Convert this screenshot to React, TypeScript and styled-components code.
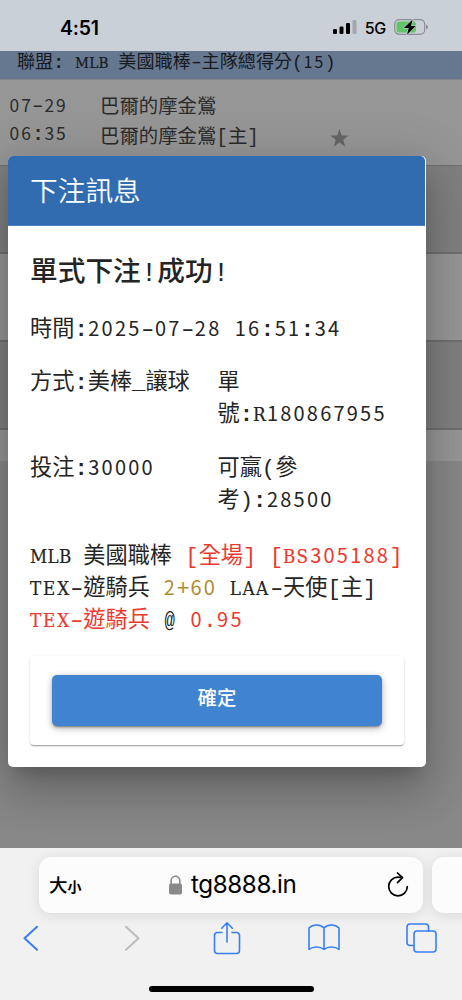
import React from "react";
import styled, { createGlobalStyle, css } from "styled-components";

const Global = createGlobalStyle`
  *, *::before, *::after { box-sizing: border-box; }
  html, body { margin: 0; padding: 0; }
  body { background: #888; -webkit-font-smoothing: antialiased; }
`;

const mono = `"Liberation Mono", "Noto Sans CJK TC", monospace`;
const ui = `Inter, "Noto Sans CJK TC", sans-serif`;

const Screen = styled.div`
  width: 462px;
  height: 1000px;
  display: flex;
  flex-direction: column;
  overflow: hidden;
  font-family: ${mono};
`;

const StatusBar = styled.header`
  flex: 0 0 51px;
  display: flex;
  align-items: center;
  justify-content: space-between;
  padding: 4px 34px 0 60px;
  background: #cad0d8;
  color: #000;
  font-family: ${ui};
`;

const Clock = styled.span`
  font-size: 19.4px;
  font-weight: 600;
  letter-spacing: -0.2px;
`;

const StatusIcons = styled.div`
  display: flex;
  align-items: center;
  svg { display: block; margin-bottom: 1px; }
`;

const Network = styled.span`
  margin: 1px 8px 0 8px;
  font-size: 16px;
  font-weight: 500;
  letter-spacing: -0.3px;
`;

const Page = styled.main`
  position: relative;
  flex: 1;
  min-height: 0;
  overflow: hidden;
  background: #888;
`;

const LeagueBar = styled.div`
  height: 28px;
  padding-left: 17px;
  background: #667890;
  color: #171a1e;
  font-size: 18.1px;
  line-height: 24px;
  white-space: nowrap;
`;

const Match = styled.div`
  display: grid;
  grid-template-columns: 91px 230px auto;
  height: 87px;
  padding: 13px 0 0 9px;
  background: #969696;
  border-top: 1px solid #828488;
  border-bottom: 1px solid #6e6e6e;
  color: #2b2b2b;
  font-size: 19.4px;
  line-height: 30px;
  white-space: nowrap;
`;

const MatchTime = styled.div`
  line-height: 28px;
`;

const StarCell = styled.div`
  align-self: end;
  height: 38px;
`;

const Stripe = styled.div<{ $tone: string; $h: number; $last?: boolean }>`
  height: ${(p) => p.$h}px;
  background: ${(p) => p.$tone};
  ${(p) => !p.$last && css`border-bottom: 2px solid #707070;`}
`;

const Dialog = styled.section`
  position: absolute;
  left: 8px;
  top: 105px;
  width: 418px;
  height: 611px;
  border-radius: 5px;
  overflow: hidden;
  background: #fff;
  color: #242424;
  display: flex;
  flex-direction: column;
  box-shadow: 0 12px 17px -8px rgba(0, 0, 0, 0.2), 0 27px 42px 3px rgba(0, 0, 0, 0.14),
    0 10px 51px 9px rgba(0, 0, 0, 0.12);
`;

const DialogHeader = styled.h2`
  flex: 0 0 70px;
  margin: 0 1px 0 0;
  padding: 7px 0 0 22px;
  border-bottom: 1px solid #4a83c4;
  border-top-right-radius: 5px;
  background: #316cb1;
  color: #fff;
  font-size: 27.7px;
  font-weight: 350;
  line-height: 62px;
`;

const DialogBody = styled.div`
  padding: 28px 22px 0;
  font-size: 22.2px;
  line-height: 32px;
  white-space: nowrap;
`;

const Headline = styled.h3`
  margin: 0 0 21px;
  font-size: 27.7px;
  font-weight: 500;
  line-height: 40px;
`;

const Details = styled.div`
  display: grid;
  grid-template-columns: 187.5px auto;
  row-gap: 22px;
  margin: 21px 0 24px;
`;

const Accent = styled.span<{ $c: string }>`
  color: ${(p) => p.$c};
`;

const ActionCard = styled.div`
  width: 374px;
  height: 89px;
  margin-top: 18px;
  padding: 19px 22px 0;
  border-radius: 4px;
  background: #fff;
  box-shadow: 0 2px 1px -1px rgba(0, 0, 0, 0.2), 0 1px 1px rgba(0, 0, 0, 0.14),
    0 1px 3px rgba(0, 0, 0, 0.14);
`;

const ConfirmButton = styled.button`
  display: block;
  width: 330px;
  height: 50.5px;
  padding: 0 0 7px;
  border: 0;
  border-radius: 5px;
  background: #4083d0;
  color: #fff;
  font-family: ${mono};
  font-size: 19.4px;
  font-weight: 500;
  box-shadow: 0 3px 1px -2px rgba(0, 0, 0, 0.2), 0 2px 2px rgba(0, 0, 0, 0.14),
    0 1px 6px rgba(0, 0, 0, 0.2), 0 4px 9px rgba(0, 0, 0, 0.12);
`;

const Digits = styled.span`
  margin: 0 -0.055em 0 0.03em;
  padding-right: 0.025em;
  font-family: "Noto Sans CJK TC", sans-serif;
  font-size: 0.9em;
  line-height: 1;
  letter-spacing: 0.1117em;
`;

const Caps = styled.span<{ $n: number; $track: number }>`
  display: inline-block;
  width: ${(p) => p.$n * 0.6}em;
  line-height: 1;
  & > span {
    display: block;
    font-family: "DejaVu Serif Condensed", "DejaVu Serif", serif;
    font-stretch: condensed;
    font-size: 0.84em;
    letter-spacing: ${(p) => p.$track}em;
    margin-right: -0.2em;
    -webkit-text-stroke: 0.2px currentColor;
  }
`;

const Glyph = styled.span<{ $sx?: number; $bold?: boolean }>`
  display: inline-block;
  line-height: 1;
  transform: scaleX(${(p) => p.$sx ?? 1});
  font-weight: ${(p) => (p.$bold ? 700 : "inherit")};
`;

const tracking: Record<string, number> = { MLB: 0.02, TEX: 0.1, LAA: 0.08, BS: 0.06, R: 0 };

/* Sets digits and slab capitals on the same 0.6em pitch as the mono text. */
function Mono({ children }: { children: string }) {
  return (
    <>
      {children.split(/(\d+|[A-Z]+|[-:@])/).map((part, i) => {
        if (/^\d+$/.test(part)) return <Digits key={i}>{part}</Digits>;
        if (/^[A-Z]+$/.test(part))
          return (
            <Caps key={i} $n={part.length} $track={tracking[part] ?? 0.1}>
              <span>{part}</span>
            </Caps>
          );
        if (part === "-") return <Glyph key={i} $sx={1.5}>-</Glyph>;
        if (part === ":") return <Glyph key={i} $bold>:</Glyph>;
        if (part === "@") return <Glyph key={i} $sx={0.78}>@</Glyph>;
        return part;
      })}
    </>
  );
}

const Browser = styled.footer`
  flex: 0 0 152px;
  display: flex;
  flex-direction: column;
  overflow: hidden;
  background: #f1f1f1;
  font-family: ${ui};
`;

const Tabs = styled.div`
  display: flex;
  gap: 9px;
  padding: 8.5px 0 0 39px;
`;

const AddressBar = styled.div`
  flex: 0 0 384px;
  display: flex;
  align-items: center;
  height: 56px;
  padding: 0 14px 0 10px;
  border-radius: 12px;
  background: #fcfcfc;
  color: #000;
  box-shadow: 0 2px 14px rgba(0, 0, 0, 0.1);
`;

const NextTab = styled(AddressBar)`
  flex-basis: 60px;
`;

const TextSize = styled.span`
  flex: 0 0 119px;
  margin-top: -2px;
  font-size: 18.5px;
  font-weight: 500;
  small {
    font-size: 14px;
    font-weight: 700;
  }
`;

const Url = styled.span`
  flex: 1;
  margin-left: 8px;
  font-size: 24.2px;
  letter-spacing: -0.4px;
`;

const Toolbar = styled.nav`
  display: grid;
  grid-template-columns: 101px 89px 95px 98px auto;
  align-items: center;
  height: 51px;
  padding: 0 0 1px 23px;
  svg { display: block; }
`;

const HomeIndicator = styled.div`
  width: 165px;
  height: 5.5px;
  margin: 22.5px 0 0 148.5px;
  border-radius: 3px;
  background: #000;
`;

const stroke = { fill: "none", stroke: "#387ff5", strokeWidth: 1.6, strokeLinecap: "round", strokeLinejoin: "round" } as const;

export default function App() {
  return (
    <Screen>
      <Global />
      <StatusBar>
        <Clock>4:51</Clock>
        <StatusIcons>
          <svg width="24" height="16" viewBox="0 0 24 16">
            <rect x="0" y="10" width="4" height="5" rx="1.2" />
            <rect x="6.5" y="7.5" width="4" height="7.5" rx="1.2" />
            <rect x="13" y="4" width="4" height="11" rx="1.2" />
            <rect x="19.5" y="1" width="4" height="14" rx="1.2" fill="#a2a6ad" />
          </svg>
          <Network>5G</Network>
          <svg width="34" height="20" viewBox="0 0 34 20">
            <rect x="0.7" y="2.7" width="30" height="14.6" rx="4.5" fill="none" stroke="#8b8f95" strokeWidth="1.2" />
            <rect x="2.5" y="4.5" width="19.5" height="11" rx="2.8" fill="#61c466" />
            <path d="M32 7.5Q34 8.3 34 10T32 12.5Z" fill="#8b8f95" />
            <path d="M18.7 2.5L9.8 11H14.7L13 17.8L21.8 9H17Z" fill="#000" stroke="#cad0d8" strokeWidth="1.1" paintOrder="stroke" />
          </svg>
        </StatusIcons>
      </StatusBar>

      <Page>
        <LeagueBar><Mono>聯盟: MLB 美國職棒-主隊總得分(15)</Mono></LeagueBar>
        <Match>
          <MatchTime>
            <div><Mono>07-29</Mono></div>
            <div><Mono>06:35</Mono></div>
          </MatchTime>
          <div>
            <div>巴爾的摩金鶯</div>
            <div>巴爾的摩金鶯[主]</div>
          </div>
          <StarCell>
            <svg width="19" height="18" viewBox="0 0 19 18">
              <path d="M9.5 0L11.8 6.5H18.7L13.2 10.7L15.2 17.5L9.5 13.5L3.8 17.5L5.8 10.7L.3 6.5H7.2Z" fill="#656565" />
            </svg>
          </StarCell>
        </Match>
        <Stripe $tone="#808080" $h={88} />
        <Stripe $tone="#979797" $h={88} />
        <Stripe $tone="#808080" $h={88} />
        <Stripe $tone="#979797" $h={31} $last />

        <Dialog>
          <DialogHeader>下注訊息</DialogHeader>
          <DialogBody>
            <Headline>單式下注!成功!</Headline>
            <div><Mono>時間:2025-07-28 16:51:34</Mono></div>
            <Details>
              <div><Mono>方式:美棒_讓球</Mono></div>
              <div>單<br /><Mono>號:R180867955</Mono></div>
              <div><Mono>投注:30000</Mono></div>
              <div>可贏(參<br /><Mono>考):28500</Mono></div>
            </Details>
            <div>
              <Mono>MLB 美國職棒 </Mono>
              <Accent $c="#ea3a2d"><Mono>[全場] [BS305188]</Mono></Accent>
            </div>
            <div>
              <Mono>TEX-遊騎兵 </Mono>
              <Accent $c="#b08c30"><Mono>2+60</Mono></Accent>
              <Mono> LAA-天使[主]</Mono>
            </div>
            <div>
              <Accent $c="#ea3a2d"><Mono>TEX-遊騎兵</Mono></Accent>
              <Mono> @ </Mono>
              <Accent $c="#ea3a2d"><Mono>0.95</Mono></Accent>
            </div>
            <ActionCard>
              <ConfirmButton>確定</ConfirmButton>
            </ActionCard>
          </DialogBody>
        </Dialog>
      </Page>

      <Browser>
        <Tabs>
          <AddressBar>
            <TextSize>大<small>小</small></TextSize>
            <svg width="15" height="20" viewBox="0 0 15 20">
              <path d="M3.2 9V5.5a4.3 4.3 0 0 1 8.6 0V9" fill="none" stroke="#8a8a8c" strokeWidth="1.6" />
              <rect x="1" y="8.5" width="13" height="11" rx="1.7" fill="#8a8a8c" />
            </svg>
            <Url>tg8888.in</Url>
            <svg width="22" height="26" viewBox="0 0 22 26" fill="none" stroke="#000" strokeWidth="1.7" strokeLinecap="round" strokeLinejoin="round">
              <path d="M20.3 14.5A9.3 9.3 0 1 1 11 5.2Q13.2 5.2 15 5.6" />
              <path d="M10.5 1L15.5 5.7L10.5 10.6" />
            </svg>
          </AddressBar>
          <NextTab />
        </Tabs>
        <Toolbar>
          <svg width="16" height="26" viewBox="0 0 16 26" {...stroke} strokeWidth={2}><path d="M14 1.7L1.5 13.2L14 24.7" /></svg>
          <svg width="16" height="26" viewBox="0 0 16 26" {...stroke} strokeWidth={2} stroke="#bcbcbe"><path d="M2 1.7L14.5 13.2L2 24.7" /></svg>
          <svg width="28" height="34" viewBox="0 0 28 34" {...stroke}>
            <path d="M9 11.5H4.5Q1.5 11.5 1.5 14.5V29.5Q1.5 32.5 4.5 32.5H23.5Q26.5 32.5 26.5 29.5V14.5Q26.5 11.5 23.5 11.5H19M14 21V2M8.7 7.2L14 1.8L19.3 7.2" />
          </svg>
          <svg width="32" height="27" viewBox="0 0 32 27" {...stroke}>
            <path d="M16 4Q13 1 8.5 1Q4 1 1 4V25.5Q4 23 8.5 23Q13 23 16 25.5Q19 23 23.5 23Q28 23 31 25.5V4Q28 1 23.5 1Q19 1 16 4V25.5" />
          </svg>
          <svg width="31" height="30" viewBox="0 0 31 30" {...stroke}>
            <path d="M8 22.5H4Q1 22.5 1 19.5V4Q1 1 4 1H19.5Q22.5 1 22.5 4V8" />
            <rect x="8" y="8" width="22" height="21" rx="3" />
          </svg>
        </Toolbar>
        <HomeIndicator />
      </Browser>
    </Screen>
  );
}
